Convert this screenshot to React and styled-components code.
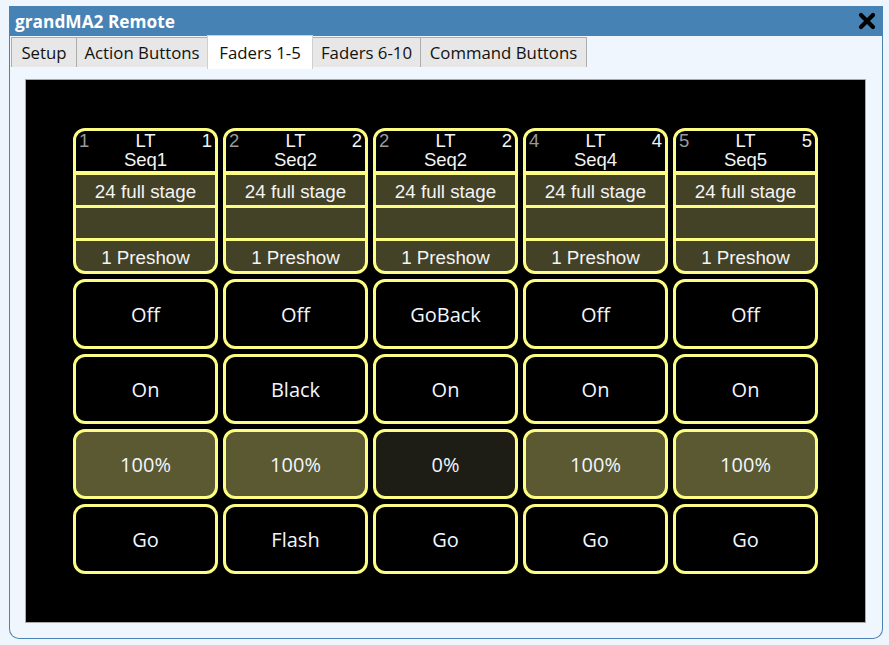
import styled, { createGlobalStyle } from "styled-components"

const GlobalStyle = createGlobalStyle`
    html, body {
        margin: 0;
        padding: 0;
        background: #eef5fd;
    }
    * {
        box-sizing: border-box;
    }
`

const faders = [
    { left: "1", right: "1", name: "Seq1", a: "Off", b: "On", level: "100%", go: "Go" },
    { left: "2", right: "2", name: "Seq2", a: "Off", b: "Black", level: "100%", go: "Flash" },
    { left: "2", right: "2", name: "Seq2", a: "GoBack", b: "On", level: "0%", go: "Go" },
    { left: "4", right: "4", name: "Seq4", a: "Off", b: "On", level: "100%", go: "Go" },
    { left: "5", right: "5", name: "Seq5", a: "Off", b: "On", level: "100%", go: "Go" },
]

const tabs = [
    { label: "Setup", width: 66 },
    { label: "Action Buttons", width: 132 },
    { label: "Faders 1-5", width: 106, active: true },
    { label: "Faders 6-10", width: 109 },
    { label: "Command Buttons", width: 167 },
]

const CloseIcon = () => (
    <svg width="18" height="18" viewBox="0 0 18 18">
        <path d="M3 3 L15 15 M15 3 L3 15" stroke="#000" strokeWidth="4.2" strokeLinecap="round" />
    </svg>
)

const FaderHeader = ({ data }) => (
    <HeaderCard>
        <HeaderTop>
            <NumberRow>
                <Num $dim>{data.left}</Num>
                <span>LT</span>
                <Num>{data.right}</Num>
            </NumberRow>
            <SeqName>{data.name}</SeqName>
        </HeaderTop>
        <HeaderCell $line={4}>24 full stage</HeaderCell>
        <HeaderCell $line={3}></HeaderCell>
        <HeaderCell $line={3}>1 Preshow</HeaderCell>
    </HeaderCard>
)

export default function App() {
    return (
        <>
            <GlobalStyle />
            <Page>
                <Window>
                    <TitleBar>
                        <Title>grandMA2 Remote</Title>
                        <CloseIcon />
                    </TitleBar>
                    <TabBar>
                        {tabs.map((t) => (
                            <Tab key={t.label} $active={t.active} $width={t.width}>{t.label}</Tab>
                        ))}
                    </TabBar>
                    <Panel>
                        <FaderGrid>
                            {faders.map((f, i) => (
                                <Column key={i}>
                                    <FaderHeader data={f} />
                                    <Button>{f.a}</Button>
                                    <Button>{f.b}</Button>
                                    <Button $fill={f.level === "0%" ? "#1e1d15" : "#5b5931"}>{f.level}</Button>
                                    <Button>{f.go}</Button>
                                </Column>
                            ))}
                        </FaderGrid>
                    </Panel>
                </Window>
            </Page>
        </>
    )
}

const Page = styled.div`
    padding: 6px 6px 0 9px;
    width: 889px;
    height: 645px;
`

const Window = styled.div`
    width: 874px;
    height: 633px;
    border: 1px solid #4a82b6;
    border-top: none;
    border-radius: 0 0 10px 10px;
    background: #eff6fe;
    display: flex;
    flex-direction: column;
`

const TitleBar = styled.div`
    height: 30px;
    margin: 0 -1px;
    background: #4682b4;
    display: flex;
    align-items: center;
    justify-content: space-between;
    padding: 0 7px 0 6px;
`

const Title = styled.div`
    font-family: "Open Sans", sans-serif;
    font-weight: 700;
    font-size: 17.3px;
    color: #fff;
    margin-top: 1px;
`

const TabBar = styled.div`
    display: flex;
    align-items: flex-end;
    height: 31px;
    padding-left: 2px;
`

const Tab = styled.div`
    width: ${(p) => p.$width}px;
    font-family: "Open Sans", sans-serif;
    font-size: 16.8px;
    color: #111;
    height: ${(p) => (p.$active ? "34px" : "30px")};
    margin-bottom: ${(p) => (p.$active ? "-2px" : "0")};
    display: flex;
    align-items: center;
    justify-content: center;
    white-space: nowrap;
    background: ${(p) => (p.$active ? "#fff" : "#e7e7e7")};
    border: 1px solid ${(p) => (p.$active ? "#d0d0d0" : "#adadad")};
    border-bottom: none;
    margin-left: -1px;
    position: relative;
    z-index: ${(p) => (p.$active ? 1 : 0)};
`

const Panel = styled.div`
    margin: 12px 16px 0 15px;
    height: 544px;
    background: #000;
    border: 1px solid #a9a9a9;
    display: flex;
    justify-content: center;
    padding-top: 48px;
`

const FaderGrid = styled.div`
    display: grid;
    grid-template-columns: repeat(5, 145px);
    column-gap: 5px;
    align-content: start;
`

const Column = styled.div`
    display: flex;
    flex-direction: column;
    gap: 5px;
`

const HeaderCard = styled.div`
    height: 146px;
    border: 3px solid #fdfd84;
    border-radius: 12px;
    overflow: hidden;
    background: #fdfd84;
    display: flex;
    flex-direction: column;
    font-family: "Liberation Sans", Arial, sans-serif;
    color: #f4f4f4;
`

const HeaderTop = styled.div`
    height: 40px;
    background: #000;
    display: flex;
    flex-direction: column;
    align-items: center;
    font-size: 18.5px;
    line-height: 19px;
`

const NumberRow = styled.div`
    width: 100%;
    display: flex;
    justify-content: space-between;
    padding: 0 3px 0 3px;
`

const Num = styled.span`
    width: 14px;
    text-align: ${(p) => (p.$dim ? "left" : "right")};
    color: ${(p) => (p.$dim ? "#9a9a9a" : "#f4f4f4")};
`

const SeqName = styled.div``

const HeaderCell = styled.div`
    height: 30px;
    margin-top: ${(p) => p.$line}px;
    padding-top: 3px;
    background: #434126;
    display: flex;
    align-items: center;
    justify-content: center;
    font-size: 18.8px;
    &:last-child {
        flex: 1;
    }
`

const Button = styled.div`
    height: 70px;
    border: 3px solid #fdfd84;
    border-radius: 12px;
    background: ${(p) => p.$fill || "#000"};
    color: #f2f6ff;
    display: flex;
    align-items: center;
    justify-content: center;
    font-family: "Open Sans", sans-serif;
    font-size: 20px;
`
